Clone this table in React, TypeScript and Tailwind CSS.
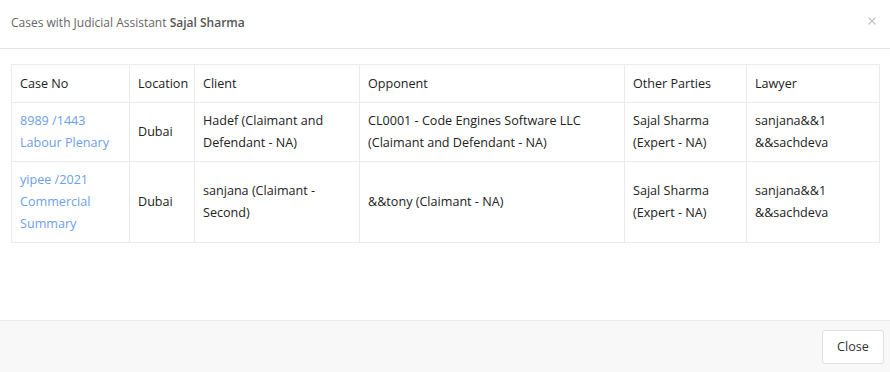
import { X } from 'lucide-react'

type Row = {
  caseNo: string
  caseType: string[]
  location: string
  client: string[]
  opponent: string[]
  others: string[]
  lawyer: string[]
}

const rows: Row[] = [
  {
    caseNo: '8989 /1443',
    caseType: ['Labour Plenary'],
    location: 'Dubai',
    client: ['Hadef (Claimant and', 'Defendant - NA)'],
    opponent: ['CL0001 - Code Engines Software LLC', '(Claimant and Defendant - NA)'],
    others: ['Sajal Sharma', '(Expert - NA)'],
    lawyer: ['sanjana&&1', '&&sachdeva'],
  },
  {
    caseNo: 'yipee /2021',
    caseType: ['Commercial', 'Summary'],
    location: 'Dubai',
    client: ['sanjana (Claimant -', 'Second)'],
    opponent: ['&&tony (Claimant - NA)'],
    others: ['Sajal Sharma', '(Expert - NA)'],
    lawyer: ['sanjana&&1', '&&sachdeva'],
  },
]

const lines = (items: string[]) =>
  items.map((t, i) => (
    <div key={i} className="whitespace-nowrap">
      {t}
    </div>
  ))

export default function App() {
  return (
    <div
      className="w-[890px] h-[372px] bg-white flex flex-col text-[12.6px] leading-[22px] text-[#222]"
      style={{ fontFamily: '"Open Sans", "Segoe UI", sans-serif' }}
    >
      {/* Header */}
      <div className="h-[49px] border-b border-[#e5e5e5] flex items-center justify-between pl-[11px] pr-[12px] pb-[3px]">
        <div className="text-[12px] text-[#666]">
          Cases with Judicial Assistant <span className="font-semibold text-[#555]">Sajal Sharma</span>
        </div>
        <X className="w-[12px] h-[12px] text-[#c4c4c4] -mt-[3px]" strokeWidth={2.5} />
      </div>

      {/* Body */}
      <div className="flex-1 pt-[15px] px-[11px]">
        <table className="w-[868px] border-collapse table-fixed">
          <colgroup>
            <col className="w-[118px]" />
            <col className="w-[65px]" />
            <col className="w-[165px]" />
            <col className="w-[265px]" />
            <col className="w-[122px]" />
            <col className="w-[133px]" />
          </colgroup>
          <thead>
            <tr className="h-[38px]">
              {['Case No', 'Location', 'Client', 'Opponent', 'Other Parties', 'Lawyer'].map((h) => (
                <th key={h} className="border border-[#ebebeb] px-[8px] text-left font-normal align-middle">
                  {h}
                </th>
              ))}
            </tr>
          </thead>
          <tbody>
            {rows.map((r, i) => (
              <tr key={i}>
                <td className="border border-[#ebebeb] px-[8px] py-[7px] align-middle text-[#6e9ee8]">
                  <div className="whitespace-nowrap">{r.caseNo}</div>
                  {lines(r.caseType)}
                </td>
                <td className="border border-[#ebebeb] px-[8px] align-middle">{r.location}</td>
                <td className="border border-[#ebebeb] px-[8px] align-middle">{lines(r.client)}</td>
                <td className="border border-[#ebebeb] px-[8px] align-middle">{lines(r.opponent)}</td>
                <td className="border border-[#ebebeb] px-[8px] align-middle">{lines(r.others)}</td>
                <td className="border border-[#ebebeb] px-[8px] align-middle">{lines(r.lawyer)}</td>
              </tr>
            ))}
          </tbody>
        </table>
      </div>

      {/* Footer */}
      <div className="h-[52px] bg-[#f8f8f8] border-t border-[#e8e8e8] flex items-center justify-end pr-[6px]">
        <button className="w-[62px] h-[34px] bg-white border border-[#e0e0e0] rounded-[3px] text-[#333]">
          Close
        </button>
      </div>
    </div>
  )
}
